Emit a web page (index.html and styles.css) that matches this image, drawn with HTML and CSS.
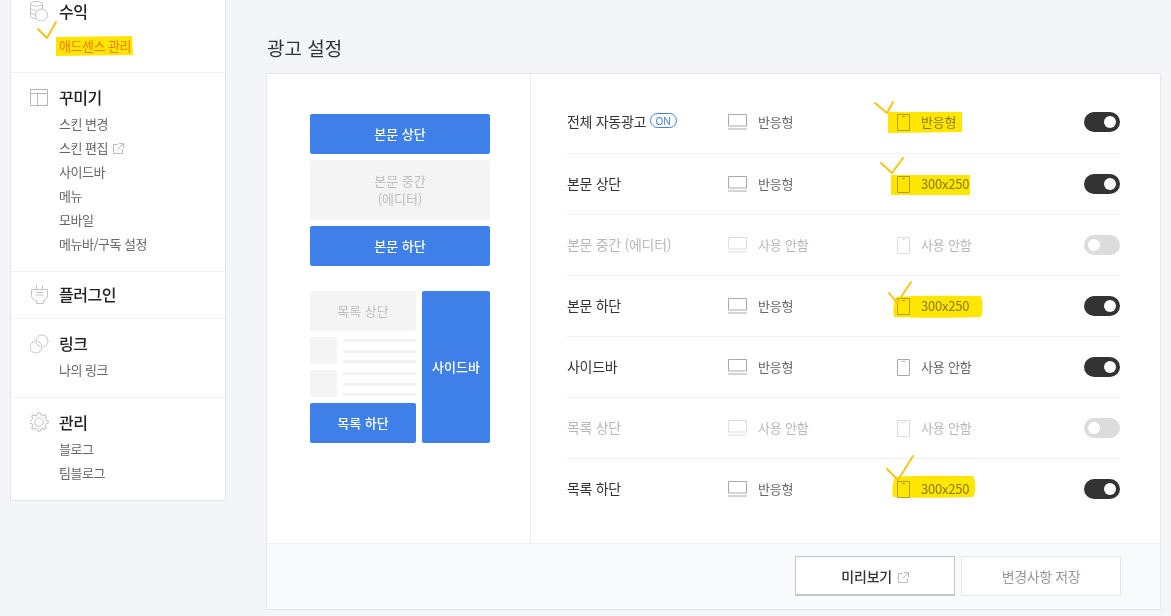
FILE: index.html
```html
<!DOCTYPE html>
<html lang="ko">
<head>
<meta charset="utf-8">
<title>광고 설정</title>
<link rel="stylesheet" href="styles.css">
</head>
<body>
<svg width="0" height="0" class="defs">
  <defs>
    <symbol id="ext" viewBox="0 0 11 11"><path d="M4.500 1.500H.5v9h9v-4M6 .5h4.500v4.500M10.500.5 4.500 6.500" fill="none" stroke="currentColor"/></symbol>
    <symbol id="laptop" viewBox="0 0 19 16"><path d="M.5.500h18v11.500H.5z" fill="none" stroke="currentColor"/><path d="M0 15h19" stroke="currentColor"/></symbol>
    <symbol id="phone" viewBox="0 0 13 17"><path d="M.5.500h12v16H.5z" fill="none" stroke="currentColor"/><path d="M5 2.500h3" stroke="currentColor"/></symbol>
    <path id="tooth" d="M7.210 3.260 8.360 2.890 8.710.79H11.290L11.640 2.890 12.790 3.260"/>
  </defs>
</svg>
<div class="page">
  <nav class="side">
    <section class="group group-first">
      <h2 class="group-title"><svg class="gicon" viewBox="0 0 20 20"><g fill="none" stroke="currentColor"><ellipse cx="6.500" cy="2.800" rx="6" ry="2.300"/><path d="M.5 2.800v12.400c0 1.300 2.500 2.300 5.500 2.300M.5 7c0 1.300 2.700 2.300 6 2.300M.5 11.200c0 1.300 2.300 2.300 5 2.300M12.500 2.800v5"/><circle cx="11.500" cy="14" r="6"/></g></svg>수익</h2>
      <ul class="items"><li class="active">애드센스 관리</li></ul>
    </section>
    <section class="group">
      <h2 class="group-title"><svg class="gicon gicon-dark" viewBox="0 0 20 20"><path d="M.5 2.500h17v16H.5zM.5 6.500h17M7.500 6.500v12" fill="none" stroke="currentColor"/></svg>꾸미기</h2>
      <ul class="items">
        <li>스킨 변경</li>
        <li>스킨 편집 <svg class="ext"><use href="#ext"/></svg></li>
        <li>사이드바</li>
        <li>메뉴</li>
        <li>모바일</li>
        <li>메뉴바/구독 설정</li>
      </ul>
    </section>
    <section class="group group-single">
      <h2 class="group-title"><svg class="gicon" viewBox="0 0 20 20"><path d="M6.500 1v4.500M12.500 1v4.500M1.500 5.500h16v6c0 3-1.500 4.500-4 5v3h-7v-3c-2.500-.5-5-2-5-5zM5.500 8.500h8M5.500 11h8" fill="none" stroke="currentColor"/></svg>플러그인</h2>
    </section>
    <section class="group">
      <h2 class="group-title"><svg class="gicon" viewBox="0 0 20 20"><g fill="none"><circle cx="12" cy="8" r="6" stroke="currentColor"/><path d="M11.640 11.950A6 6 0 0 1 11.640 16.050" stroke="#fff" stroke-width="3"/><circle cx="6" cy="14" r="6" stroke="currentColor"/><path d="M6.360 5.950A6 6 0 0 0 6.360 10.050" stroke="#fff" stroke-width="3"/><path d="M6.360 5.950A6 6 0 0 0 6.360 10.050" stroke="currentColor"/></g></svg>링크</h2>
      <ul class="items"><li>나의 링크</li></ul>
    </section>
    <section class="group">
      <h2 class="group-title"><svg class="gicon" viewBox="0 0 20 20"><g fill="none" stroke="currentColor" transform="translate(-1 0)"><circle cx="10" cy="10" r="4.300"/><use href="#tooth"/><use href="#tooth" transform="rotate(45 10 10)"/><use href="#tooth" transform="rotate(90 10 10)"/><use href="#tooth" transform="rotate(135 10 10)"/><use href="#tooth" transform="rotate(180 10 10)"/><use href="#tooth" transform="rotate(225 10 10)"/><use href="#tooth" transform="rotate(270 10 10)"/><use href="#tooth" transform="rotate(315 10 10)"/></g></svg>관리</h2>
      <ul class="items"><li>블로그</li><li>팀블로그</li></ul>
    </section>
  </nav>
  <main class="main">
    <h1 class="title">광고 설정</h1>
    <div class="panel">
      <div class="panel-body">
        <div class="preview">
          <div class="pv-top">
            <div class="box on">본문 상단</div>
            <div class="box off mid">본문 중간<br>(에디터)</div>
            <div class="box on">본문 하단</div>
          </div>
          <div class="pv-bottom">
            <div class="pv-list">
              <div class="box off">목록 상단</div>
              <div class="thumb-row"><span class="thumb"></span><span class="lines"><i></i><i></i><i></i></span></div>
              <div class="thumb-row"><span class="thumb"></span><span class="lines"><i></i><i></i><i></i></span></div>
              <div class="box on">목록 하단</div>
            </div>
            <div class="box on pv-side">사이드바</div>
          </div>
        </div>
        <div class="rows">
          <div class="row">
            <div class="r-name">전체 자동광고 <span class="badge">ON</span></div>
            <div class="r-pc"><svg class="i-laptop"><use href="#laptop"/></svg>반응형</div>
            <div class="r-mo hl"><svg class="i-phone"><use href="#phone"/></svg>반응형</div>
            <span class="toggle"></span>
          </div>
          <div class="row">
            <div class="r-name">본문 상단</div>
            <div class="r-pc"><svg class="i-laptop"><use href="#laptop"/></svg>반응형</div>
            <div class="r-mo hl"><svg class="i-phone"><use href="#phone"/></svg>300x250</div>
            <span class="toggle"></span>
          </div>
          <div class="row disabled">
            <div class="r-name">본문 중간 (에디터)</div>
            <div class="r-pc"><svg class="i-laptop"><use href="#laptop"/></svg>사용 안함</div>
            <div class="r-mo"><svg class="i-phone"><use href="#phone"/></svg>사용 안함</div>
            <span class="toggle"></span>
          </div>
          <div class="row">
            <div class="r-name">본문 하단</div>
            <div class="r-pc"><svg class="i-laptop"><use href="#laptop"/></svg>반응형</div>
            <div class="r-mo hl"><svg class="i-phone"><use href="#phone"/></svg>300x250</div>
            <span class="toggle"></span>
          </div>
          <div class="row">
            <div class="r-name">사이드바</div>
            <div class="r-pc"><svg class="i-laptop"><use href="#laptop"/></svg>반응형</div>
            <div class="r-mo"><svg class="i-phone"><use href="#phone"/></svg>사용 안함</div>
            <span class="toggle"></span>
          </div>
          <div class="row disabled">
            <div class="r-name">목록 상단</div>
            <div class="r-pc"><svg class="i-laptop"><use href="#laptop"/></svg>사용 안함</div>
            <div class="r-mo"><svg class="i-phone"><use href="#phone"/></svg>사용 안함</div>
            <span class="toggle"></span>
          </div>
          <div class="row">
            <div class="r-name">목록 하단</div>
            <div class="r-pc"><svg class="i-laptop"><use href="#laptop"/></svg>반응형</div>
            <div class="r-mo hl"><svg class="i-phone"><use href="#phone"/></svg>300x250</div>
            <span class="toggle"></span>
          </div>
        </div>
      </div>
      <div class="panel-foot">
        <button class="btn">미리보기 <svg class="ext"><use href="#ext"/></svg></button>
        <button class="btn btn-muted">변경사항 저장</button>
      </div>
    </div>
  </main>
</div>
<svg class="marks" viewBox="0 0 1171 616" width="1171" height="616">
  <g class="marks-fill">
    <path d="M56 37 132 36 133 55 56 56z"/>
    <path d="M888 112h74l0 20-74 1z"/>
    <path d="M891 175h79v20h-79z"/>
    <path d="M896 297c20-2 60-1 85-1 2 6 2 16 0 21-25 1-70 1-87 0-1-6-1-14 2-20z"/>
    <path d="M895 477c20-2 55-1 78-1 3 6 3 16 0 21-25 1-60 1-80 0-1-6-1-14 2-20z"/>
  </g>
  <g class="marks-line">
    <path d="M38 29 47 38 56 22"/>
    <path d="M875 103 887 113 893 102"/>
    <path d="M881 163 892 173 903 158"/>
    <path d="M889 293 897 303 911 282"/>
    <path d="M887 469 898 480 913 456"/>
  </g>
</svg>
</body>
</html>
```
FILE: styles.css
```css
* { box-sizing: border-box; }
html, body { margin: 0; padding: 0; height: 616px; overflow: hidden; }
body {
  position: relative;
  background: #f3f5f8;
  font-family: "Noto Sans CJK KR", "Noto Sans", sans-serif;
  color: #333;
}
.defs { position: absolute; }
.page { display: flex; align-items: flex-start; padding-left: 10px; }

.side {
  width: 216px;
  margin-top: -8px;
  background: #fff;
  border: 1px solid #e4e6ea;
  flex: none;
}
.group { padding: 12px 0 15px; border-bottom: 1px solid #eef0f3; }
.group:last-child { border-bottom: 0; }
.group-first { padding-top: 6px; padding-bottom: 14px; }
.group-first .items { margin-top: 11px; }
.group-single { padding-top: 10px; padding-bottom: 12px; }
.group-title {
  display: flex;
  align-items: center;
  margin: 0;
  padding-left: 19px;
  height: 24px;
  font-size: 16px;
  letter-spacing: -.5px;
  font-weight: 500;
  color: #222;
}
.gicon { width: 20px; height: 20px; margin-right: 9px; color: #c2c4c8; flex: none; }
.gicon-dark { color: #b5b7ba; }
.items { list-style: none; margin: 3px 0 0; padding: 0 0 0 48px; }
.items li { height: 24px; line-height: 24px; font-size: 13px; letter-spacing: -.5px; color: #666; }
.items li.active { color: #f58a00; }
.ext { width: 11px; height: 11px; color: #bbb; margin-left: 2px; vertical-align: -1px; }

.main { margin-left: 40px; width: 895px; flex: none; }
.title { margin: 0; height: 73px; padding-top: 34px; font-size: 19px; line-height: 28px; font-weight: 400; color: #333; padding-left: 1px; }
.panel { background: #fff; border: 1px solid #e4e6ea; height: 537px; display: flex; flex-direction: column; }
.panel-body { display: flex; flex: 1; min-height: 0; border-bottom: 1px solid #eef0f3; }
.preview { width: 264px; flex: none; border-right: 1px solid #eef0f3; padding: 40px 0 0 43px; }
.pv-top { width: 180px; display: flex; flex-direction: column; gap: 6px; }
.box {
  display: flex; align-items: center; justify-content: center; text-align: center;
  height: 40px; border-radius: 2px; font-size: 13px; line-height: 18px;
}
.box.on { background: #3e7fe8; color: #fff; font-weight: 500; }
.box.off { background: #f4f4f4; color: #bdbdbd; }
.box.mid { height: 60px; }
.pv-bottom { display: flex; gap: 6px; width: 180px; margin-top: 25px; }
.pv-list { width: 106px; display: flex; flex-direction: column; gap: 6px; }
.pv-side { width: 68px; height: 152px !important; }
.thumb-row { display: flex; gap: 6px; height: 27px; }
.thumb { width: 27px; height: 27px; background: #f4f4f4; border-radius: 2px; flex: none; }
.lines { flex: 1; display: flex; flex-direction: column; justify-content: space-between; padding: 2px 0 1px; }
.lines i { display: block; height: 3px; background: #f2f2f2; }

.rows { flex: 1; padding: 18px 40px 0 36px; }
.row { display: flex; align-items: center; height: 61px; border-bottom: 1px solid #eef0f3; }
.row:first-child { height: 62px; padding-bottom: 1px; }
.row:last-child { border-bottom-color: transparent; }
.r-name { width: 161px; padding-bottom: 3px; font-size: 14px; letter-spacing: -.3px; color: #333; flex: none; display: flex; align-items: center; white-space: pre; }
.r-pc, .r-mo { display: flex; align-items: center; padding-bottom: 2px; font-size: 13px; letter-spacing: -.2px; color: #666; flex: none; }
.r-pc { width: 169px; }
.r-mo { flex: 1; }
.i-laptop { width: 19px; height: 16px; margin: 2px 11px 0 0; color: #aaa; flex: none; }
.i-phone { width: 13px; height: 17px; margin: 2px 11px 0 0; color: #aaa; flex: none; }
.r-mo.hl { color: #8f8a10; }
.r-mo.hl .i-phone { color: #b5ad20; }
.badge {
  display: inline-flex; align-items: center; justify-content: center;
  width: 27px; height: 15px; border: 1px solid #3e7fe8; border-radius: 8px;
  font-size: 10px; letter-spacing: 0; color: #3e7fe8; font-family: "Noto Sans", sans-serif;
}
.toggle { position: relative; width: 36px; height: 20px; border-radius: 10px; background: #333; flex: none; }
.toggle::after {
  content: ""; position: absolute; top: 4px; right: 4px;
  width: 12px; height: 12px; border-radius: 50%; background: #fff;
}
.row.disabled .r-name, .row.disabled .r-pc, .row.disabled .r-mo { color: #b8b8b8; }
.row.disabled .i-laptop, .row.disabled .i-phone { color: #ddd; }
.row.disabled .toggle { background: #dcdcdc; }
.row.disabled .toggle::after { right: auto; left: 4px; }

.panel-foot { height: 65px; background: #f9fafb; display: flex; justify-content: flex-end; gap: 6px; padding: 12px 39px 0 0; flex: none; }
.btn {
  width: 160px; height: 40px; background: #fff; border: 1px solid #c4c6ca; border-bottom-width: 2px;
  font: inherit; font-size: 14px; letter-spacing: -.2px; font-weight: 500; color: #333; padding: 0;
}
.btn-muted { border: 1px solid #e4e6ea; color: #999; font-weight: 400; letter-spacing: -.4px; }

.marks { position: absolute; left: 0; top: 0; pointer-events: none; }
.marks-fill path { fill: #ffe600; mix-blend-mode: multiply; }
.marks-line path { fill: none; stroke: #f5c518; stroke-width: 2; stroke-linecap: round; stroke-linejoin: round; }
```
